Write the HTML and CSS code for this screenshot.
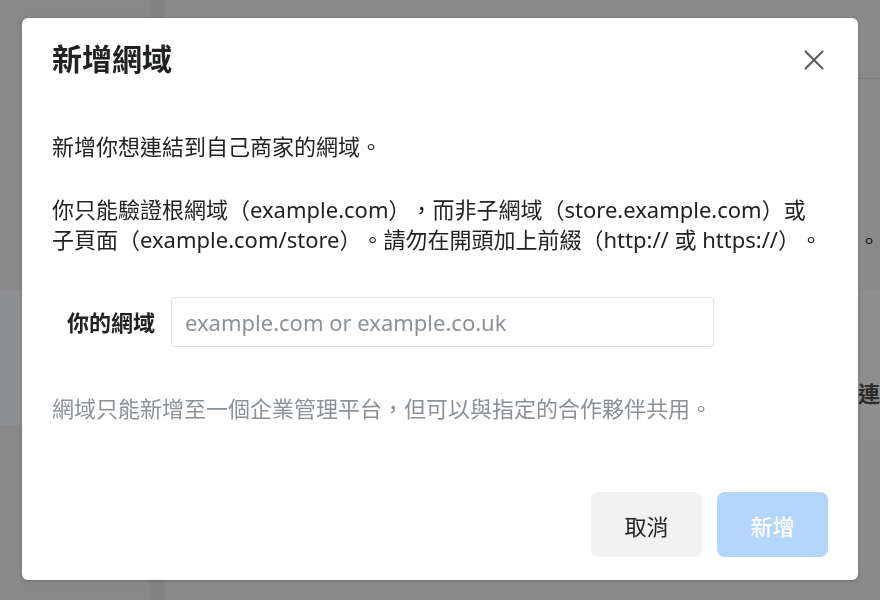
FILE: index.html
```html
<!DOCTYPE html>
<html lang="zh-Hant">
<head>
    <meta charset="UTF-8">
    <meta name="viewport" content="width=device-width, initial-scale=1.0">
    <title>新增網域</title>
    <link rel="stylesheet" href="styles.css">
</head>
<body>
    <div class="page">
        <aside class="sidebar">
            <div class="nav-item active"></div>
        </aside>
        <div class="divider"></div>
        <main class="main">
            <header class="main-header"></header>
            <p class="main-note">請確認網域設定已完成。</p>
            <section class="section">
                <div class="section-aside"></div>
                <div class="section-card">
                    <h2>連結網域</h2>
                </div>
            </section>
        </main>
    </div>

    <div class="overlay">
        <div class="modal" role="dialog" aria-labelledby="modal-title">
            <div class="modal-header">
                <h1 id="modal-title">新增網域</h1>
                <button class="close-btn" aria-label="關閉">
                    <svg viewBox="0 0 24 24" width="24" height="24">
                        <path d="M3.5 3.5 L20.5 20.5 M20.5 3.5 L3.5 20.5" />
                    </svg>
                </button>
            </div>
            <div class="modal-body">
                <p class="intro">新增你想連結到自己商家的網域。</p>
                <p class="rules">你只能驗證根網域（example.com），而非子網域（store.example.com）或<br>子頁面（example.com/store）。請勿在開頭加上前綴（http:// 或 https://）。</p>
                <div class="field">
                    <label for="domain">你的網域</label>
                    <input type="text" id="domain" placeholder="example.com or example.co.uk">
                </div>
                <p class="help">網域只能新增至一個企業管理平台，但可以與指定的合作夥伴共用。</p>
            </div>
            <div class="modal-footer">
                <button class="btn btn-cancel">取消</button>
                <button class="btn btn-primary" disabled>新增</button>
            </div>
        </div>
    </div>
</body>
</html>
```

FILE: styles.css
```css
* {
    margin: 0;
    padding: 0;
    box-sizing: border-box;
}

body {
    font-family: "Noto Sans", "Noto Sans CJK TC", sans-serif;
    font-size: 22px;
    color: #202223;
    overflow: hidden;
    text-spacing-trim: space-all;
}

/* page behind the dialog */
.page {
    display: flex;
    height: 100vh;
    background: #eeeeee;
}

.sidebar {
    flex-shrink: 0;
    width: 150px;
    background: #ececec;
    padding-top: 290px;
}

.nav-item.active {
    height: 135px;
    background: #f3f6fb;
}

.divider {
    flex-shrink: 0;
    width: 15px;
    background: #e2e2e2;
}

.main {
    flex: 1;
    min-width: 0;
}

.main-header {
    height: 79px;
    border-bottom: 1px solid #dadada;
}

.main-note {
    text-align: right;
    line-height: 30px;
    margin-top: 146px;
    white-space: nowrap;
}

.section {
    display: flex;
    margin-top: 35px;
    height: 150px;
}

.section-aside {
    flex-shrink: 0;
    width: 693px;
}

.section-card {
    flex: 1;
    min-width: 0;
    background: #f5f5f5;
    padding-top: 88px;
    overflow: hidden;
}

.section-card h2 {
    font-size: 22px;
    font-weight: 700;
    line-height: 30px;
    white-space: nowrap;
    color: #4a4a4a;
}

/* dialog */
.overlay {
    position: fixed;
    inset: 0;
    background: rgba(0, 0, 0, 0.42);
    display: flex;
    justify-content: center;
    align-items: flex-start;
    padding-top: 18px;
}

.modal {
    width: 836px;
    height: 562px;
    background: #ffffff;
    border-radius: 6px;
    box-shadow: 0 1px 4px rgba(0, 0, 0, 0.2);
    display: flex;
    flex-direction: column;
}

.modal-header {
    display: flex;
    justify-content: space-between;
    align-items: center;
    padding: 21px 32px 0 30px;
}

.modal-header h1 {
    font-size: 30px;
    font-weight: 700;
    line-height: 40px;
    color: #202223;
}

.close-btn {
    background: none;
    border: none;
    cursor: pointer;
    display: flex;
    margin-top: 2px;
}

.close-btn svg path {
    fill: none;
    stroke: #5c5f62;
    stroke-width: 2.2;
    stroke-linecap: round;
}

.modal-body {
    padding: 52px 30px 0;
    line-height: 30px;
}

.intro {
    margin-bottom: 33px;
}

.rules {
    white-space: nowrap;
}

.field {
    display: flex;
    align-items: center;
    gap: 16px;
    margin-top: 43px;
}

.field label {
    width: 103px;
    text-align: right;
    font-weight: 700;
}

.field input {
    width: 543px;
    height: 50px;
    border: 1px solid #dcdfe3;
    border-radius: 4px;
    padding: 0 13px;
    font-family: inherit;
    font-size: 22px;
    color: #202223;
}

.field input::placeholder {
    color: #8c9196;
}

.help {
    margin-top: 46px;
    color: #8c9196;
}

.modal-footer {
    margin-top: auto;
    display: flex;
    justify-content: flex-end;
    gap: 15px;
    padding: 0 30px 23px;
}

.btn {
    width: 111px;
    height: 65px;
    border: none;
    border-radius: 8px;
    font-family: inherit;
    font-size: 22px;
    cursor: pointer;
}

.btn-cancel {
    background: #f1f1f1;
    color: #202223;
}

.btn-primary {
    background: #b4d5fd;
    color: #ffffff;
    font-weight: 500;
}
```
